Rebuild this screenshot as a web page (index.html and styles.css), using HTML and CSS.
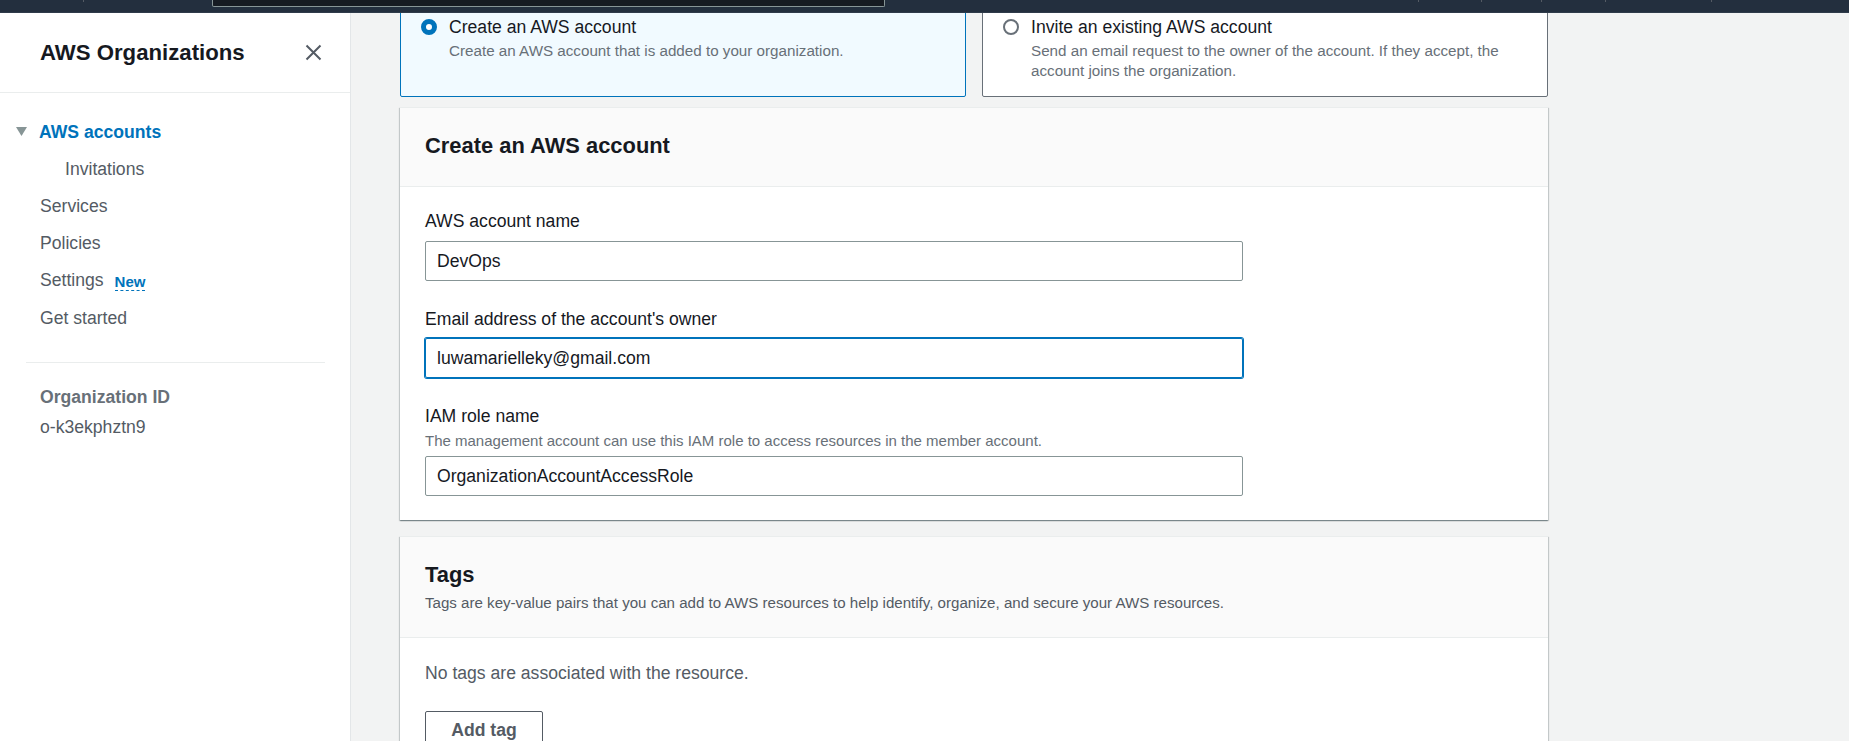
FILE: index.html
```html
<!DOCTYPE html>
<html lang="en">
<head>
<meta charset="utf-8">
<title>AWS Organizations - Add an AWS account</title>
<link rel="stylesheet" href="styles.css">
</head>
<body>
<header class="topbar">
  <div class="tb-left"><span class="tb-tick"></span></div>
  <div class="tb-search"></div>
  <div class="tb-right">
    <span class="tb-tick w63"></span>
    <span class="tb-tick w60"></span>
    <span class="tb-tick w64"></span>
    <span class="tb-tick w106"></span>
    <span class="tb-tick"></span>
  </div>
</header>
<div class="layout">
  <aside class="sidebar">
    <div class="side-head">
      <h2 class="side-title">AWS Organizations</h2>
      <button class="close" aria-label="Close">
        <svg width="17" height="17" viewBox="0 0 17 17"><path d="M1.5 1.5 L15.5 15.5 M15.5 1.5 L1.5 15.5" stroke="#545b64" stroke-width="2" fill="none" stroke-linecap="butt"/></svg>
      </button>
    </div>
    <ul class="side-nav">
      <li class="nav-item active">
        <svg class="caret" width="11" height="9" viewBox="0 0 11 9"><polygon points="0,0 11,0 5.5,9" fill="#879596"/></svg>
        <span>AWS accounts</span>
      </li>
      <li class="nav-item sub">Invitations</li>
      <li class="nav-item">Services</li>
      <li class="nav-item">Policies</li>
      <li class="nav-item">Settings <span class="badge-new">New</span></li>
      <li class="nav-item">Get started</li>
    </ul>
    <hr class="side-divider">
    <div class="org">
      <div class="org-label">Organization ID</div>
      <div class="org-id">o-k3ekphztn9</div>
    </div>
  </aside>
  <main class="main">
    <div class="content">
      <div class="tiles">
        <div class="tile selected">
          <span class="radio checked"></span>
          <div class="tile-text">
            <div class="tile-title">Create an AWS account</div>
            <div class="tile-desc">Create an AWS account that is added to your organization.</div>
          </div>
        </div>
        <div class="tile">
          <span class="radio"></span>
          <div class="tile-text">
            <div class="tile-title">Invite an existing AWS account</div>
            <div class="tile-desc">Send an email request to the owner of the account. If they accept, the account joins the organization.</div>
          </div>
        </div>
      </div>

      <section class="panel panel-create">
        <div class="panel-head">
          <h2 class="panel-title">Create an AWS account</h2>
        </div>
        <div class="panel-body">
          <div class="field">
            <div class="field-label">AWS account name</div>
            <div class="input">DevOps</div>
          </div>
          <div class="field">
            <div class="field-label">Email address of the account's owner</div>
            <div class="input focused">luwamarielleky@gmail.com</div>
          </div>
          <div class="field">
            <div class="field-label">IAM role name</div>
            <div class="field-desc">The management account can use this IAM role to access resources in the member account.</div>
            <div class="input">OrganizationAccountAccessRole</div>
          </div>
        </div>
      </section>

      <section class="panel panel-tags">
        <div class="panel-head tags-head">
          <h2 class="panel-title">Tags</h2>
          <div class="panel-desc">Tags are key-value pairs that you can add to AWS resources to help identify, organize, and secure your AWS resources.</div>
        </div>
        <div class="panel-body tags-body">
          <div class="empty">No tags are associated with the resource.</div>
          <button class="btn">Add tag</button>
        </div>
      </section>
    </div>
  </main>
</div>
</body>
</html>
```

FILE: styles.css
```css
* { box-sizing: border-box; }
html, body { margin: 0; padding: 0; height: 100%; }
body {
  font-family: "Liberation Sans", Arial, sans-serif;
  color: #16191f;
  background: #f2f3f3;
  overflow: hidden;
  font-size: 17.6px;
}

/* top bar */
.topbar {
  height: 13px;
  background: #232f3e;
  display: flex;
  align-items: flex-start;
  border-bottom: 1px solid #2f3b4a;
}
.tb-left { width: 212px; padding-left: 83px; }
.tb-tick { display: block; width: 1px; height: 2px; background: #545b64; }
.tb-search {
  width: 673px;
  height: 7px;
  background: #161b22;
  border: 1px solid #879596;
  border-top: none;
  border-radius: 0 0 2px 2px;
}
.tb-right { display: flex; margin-left: 533px; }
.tb-right .tb-tick { flex: none; }
.w63 { margin-right: 62px; }
.w60 { margin-right: 59px; }
.w64 { margin-right: 63px; }
.w106 { margin-right: 105px; }

/* layout */
.layout { display: flex; height: 728px; }

/* sidebar */
.sidebar {
  width: 351px;
  flex: none;
  background: #fff;
  border-right: 1px solid #e3e6e8;
}
.side-head {
  height: 80px;
  border-bottom: 1px solid #eaeded;
  display: flex;
  align-items: center;
  justify-content: space-between;
  padding: 0 28px 0 40px;
}
.side-title {
  margin: 0;
  font-size: 22.2px;
  font-weight: 700;
  color: #16191f;
}
.close {
  border: 0;
  background: none;
  padding: 0;
  width: 17px;
  height: 17px;
  display: flex;
}
.side-nav {
  list-style: none;
  margin: 0;
  padding: 20px 0 0 0;
}
.nav-item {
  line-height: 22px;
  padding: 7.6px 0 7.6px 40px;
  color: #545b64;
  display: flex;
  align-items: center;
}
.nav-item.active {
  padding-left: 16px;
  color: #0073bb;
  font-weight: 700;
}
.caret { margin-right: 12px; flex: none; }
.nav-item.sub { padding-left: 65px; }
.badge-new {
  margin-left: 11px;
  font-size: 15px;
  font-weight: 700;
  color: #0073bb;
  line-height: 17px;
  border-bottom: 1px dashed #0073bb;
  margin-top: 3px;
}
.side-divider {
  margin: 26px 25px 0 26px;
  border: 0;
  border-top: 1px solid #eaeded;
  height: 0;
}
.org { padding: 23px 0 0 40px; line-height: 22px; }
.org-label { font-weight: 700; color: #687078; }
.org-id { color: #545b64; margin-top: 8px; }

/* main */
.main {
  flex: 1;
  overflow: hidden;
  padding-left: 49px;
}
.content { width: 1148px; margin-top: -13px; }

.tiles {
  display: grid;
  grid-template-columns: 1fr 1fr;
  gap: 16px;
}
.tile {
  display: flex;
  align-items: flex-start;
  gap: 12px;
  padding: 14px 20px 16px 20px;
  border: 1px solid #687078;
  border-radius: 2px;
  background: #fff;
}
.tile.selected { background: #f1faff; border-color: #0073bb; }
.radio {
  flex: none;
  width: 16px;
  height: 16px;
  margin-top: 4px;
  border-radius: 50%;
  border: 2px solid #687078;
  background: #fff;
}
.radio.checked {
  border: 5px solid #0073bb;
  background: #fff;
}
.tile-title { line-height: 24px; }
.tile-desc {
  margin-top: 2px;
  font-size: 15.2px;
  line-height: 19.5px;
  color: #687078;
}

.panel {
  background: #fff;
  border-top: 1px solid #eaeded;
  box-shadow: 0 1px 1px 0 rgba(0, 28, 36, 0.3), 1px 1px 1px 0 rgba(0, 28, 36, 0.15), -1px 1px 1px 0 rgba(0, 28, 36, 0.15);
}
.panel-create { margin-top: 10px; }
.panel-tags { margin-top: 16px; }
.panel-head {
  background: #fafafa;
  border-bottom: 1px solid #eaeded;
  padding: 22px 25px 24px;
}
.panel-title {
  margin: 0;
  font-size: 21.9px;
  font-weight: 700;
  line-height: 32px;
}
.tags-head { padding: 22px 25px 24px; }
.panel-desc {
  margin-top: 2px;
  font-size: 15.1px;
  line-height: 20px;
  color: #545b64;
}
.panel-body { padding: 22px 25px 24px; }
.field + .field { margin-top: 26px; }
.field-label { line-height: 24px; }
.field-desc {
  margin-top: 3px;
  font-size: 15px;
  line-height: 20px;
  color: #687078;
}
.input {
  margin-top: 8px;
  width: 818px;
  height: 40px;
  border: 1px solid #879596;
  border-radius: 2px;
  padding: 0 11px;
  display: flex;
  align-items: center;
  color: #16191f;
}
.field + .field .input { margin-top: 7px; }
.field + .field .field-desc + .input { margin-top: 5px; }
.input.focused {
  border-color: #0073bb;
  box-shadow: 0 0 0 1px #0073bb;
}
.tags-body { padding-top: 23px; }
.empty { line-height: 24px; color: #545b64; }
.btn {
  margin-top: 26px;
  font-family: inherit;
  font-size: 17.6px;
  font-weight: 700;
  color: #545b64;
  background: #fff;
  border: 1px solid #545b64;
  border-radius: 2px;
  width: 118px;
  height: 38px;
  line-height: 22px;
  padding: 0;
}
```
